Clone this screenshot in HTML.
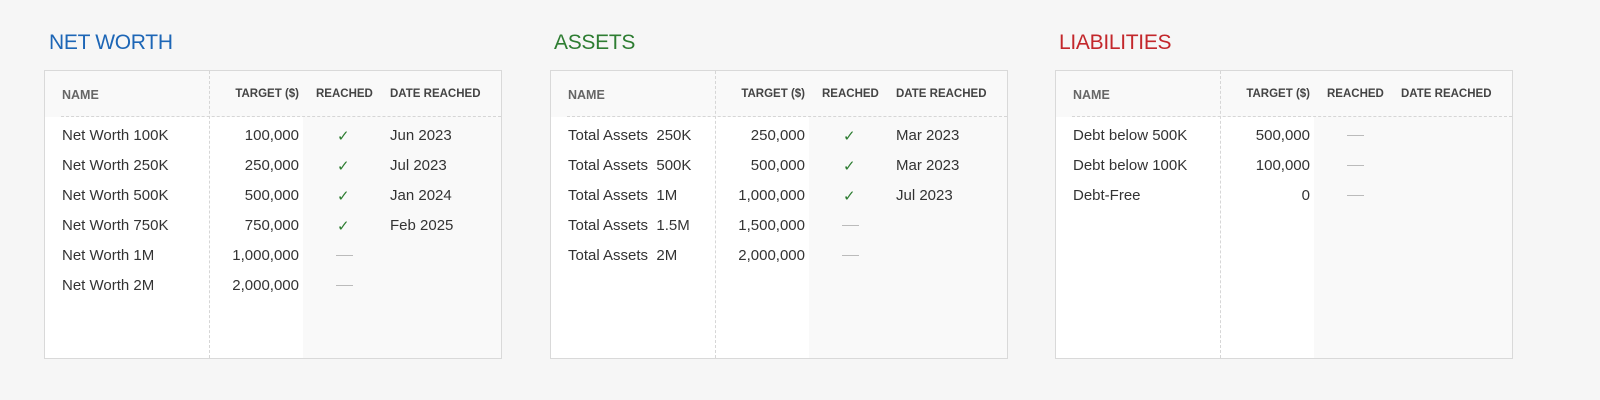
<!DOCTYPE html>
<html><head><meta charset="utf-8"><style>
*{margin:0;padding:0;box-sizing:border-box}
body{width:1600px;height:400px;background:#f6f6f6;font-family:"Liberation Sans",sans-serif;position:relative;overflow:hidden}
.t{position:absolute;top:31px;font-size:21px;letter-spacing:-0.3px}
.p{position:absolute;top:70px;width:458px;height:289px;border:1px solid #d9d9d9;background:#f9f9f9}
.wn{position:absolute;left:0;top:46px;width:165px;bottom:0;background:#fff}
.wt{position:absolute;left:165px;top:46px;width:93px;bottom:0;background:#fff}
.vl{position:absolute;left:164px;top:0;bottom:0;border-left:1px dashed #d6d6d6}
.hl{position:absolute;left:16px;right:0;top:45px;border-top:1px dashed #d6d6d6}
.h{position:absolute;top:17px;font-size:11.5px;font-weight:bold;color:#444;white-space:nowrap}
.h.n{left:17px;color:#666;font-size:12.5px}
.h.tg{right:202px;text-align:right}
.h.rc{left:271px}
.h.d{left:345px}
.r{position:absolute;font-size:15px;color:#333;white-space:nowrap;margin-top:4px}
.c1{left:17px}.c2{right:202px}.c3{left:292px;color:#2e7d32}.c4{left:345px}
.dash{position:absolute;left:291px;width:17px;border-top:1px solid #bbb;margin-top:1px}
</style></head><body>
<div class="t" style="left:49px;color:#1d66b6">NET WORTH</div>
<div class="t" style="left:554px;color:#2e7d32">ASSETS</div>
<div class="t" style="left:1059px;color:#c3272b">LIABILITIES</div>

<div class="p" style="left:44px">
<div class="wn"></div><div class="wt"></div><div class="vl"></div><div class="hl"></div>
<div class="h n">NAME</div><div class="h tg">TARGET ($)</div><div class="h rc">REACHED</div><div class="h d">DATE REACHED</div>
<div class="r c1" style="top:52px">Net Worth 100K</div><div class="r c2" style="top:52px">100,000</div><div class="r c3" style="top:52px">✓</div><div class="r c4" style="top:52px">Jun 2023</div>
<div class="r c1" style="top:82px">Net Worth 250K</div><div class="r c2" style="top:82px">250,000</div><div class="r c3" style="top:82px">✓</div><div class="r c4" style="top:82px">Jul 2023</div>
<div class="r c1" style="top:112px">Net Worth 500K</div><div class="r c2" style="top:112px">500,000</div><div class="r c3" style="top:112px">✓</div><div class="r c4" style="top:112px">Jan 2024</div>
<div class="r c1" style="top:142px">Net Worth 750K</div><div class="r c2" style="top:142px">750,000</div><div class="r c3" style="top:142px">✓</div><div class="r c4" style="top:142px">Feb 2025</div>
<div class="r c1" style="top:172px">Net Worth 1M</div><div class="r c2" style="top:172px">1,000,000</div><div class="dash" style="top:183px"></div>
<div class="r c1" style="top:202px">Net Worth 2M</div><div class="r c2" style="top:202px">2,000,000</div><div class="dash" style="top:213px"></div>
</div>

<div class="p" style="left:550px">
<div class="wn"></div><div class="wt"></div><div class="vl"></div><div class="hl"></div>
<div class="h n">NAME</div><div class="h tg">TARGET ($)</div><div class="h rc">REACHED</div><div class="h d">DATE REACHED</div>
<div class="r c1" style="top:52px">Total Assets&nbsp; 250K</div><div class="r c2" style="top:52px">250,000</div><div class="r c3" style="top:52px">✓</div><div class="r c4" style="top:52px">Mar 2023</div>
<div class="r c1" style="top:82px">Total Assets&nbsp; 500K</div><div class="r c2" style="top:82px">500,000</div><div class="r c3" style="top:82px">✓</div><div class="r c4" style="top:82px">Mar 2023</div>
<div class="r c1" style="top:112px">Total Assets&nbsp; 1M</div><div class="r c2" style="top:112px">1,000,000</div><div class="r c3" style="top:112px">✓</div><div class="r c4" style="top:112px">Jul 2023</div>
<div class="r c1" style="top:142px">Total Assets&nbsp; 1.5M</div><div class="r c2" style="top:142px">1,500,000</div><div class="dash" style="top:153px"></div>
<div class="r c1" style="top:172px">Total Assets&nbsp; 2M</div><div class="r c2" style="top:172px">2,000,000</div><div class="dash" style="top:183px"></div>
</div>

<div class="p" style="left:1055px">
<div class="wn"></div><div class="wt"></div><div class="vl"></div><div class="hl"></div>
<div class="h n">NAME</div><div class="h tg">TARGET ($)</div><div class="h rc">REACHED</div><div class="h d">DATE REACHED</div>
<div class="r c1" style="top:52px">Debt below 500K</div><div class="r c2" style="top:52px">500,000</div><div class="dash" style="top:63px"></div>
<div class="r c1" style="top:82px">Debt below 100K</div><div class="r c2" style="top:82px">100,000</div><div class="dash" style="top:93px"></div>
<div class="r c1" style="top:112px">Debt-Free</div><div class="r c2" style="top:112px">0</div><div class="dash" style="top:123px"></div>
</div>
</body></html>
